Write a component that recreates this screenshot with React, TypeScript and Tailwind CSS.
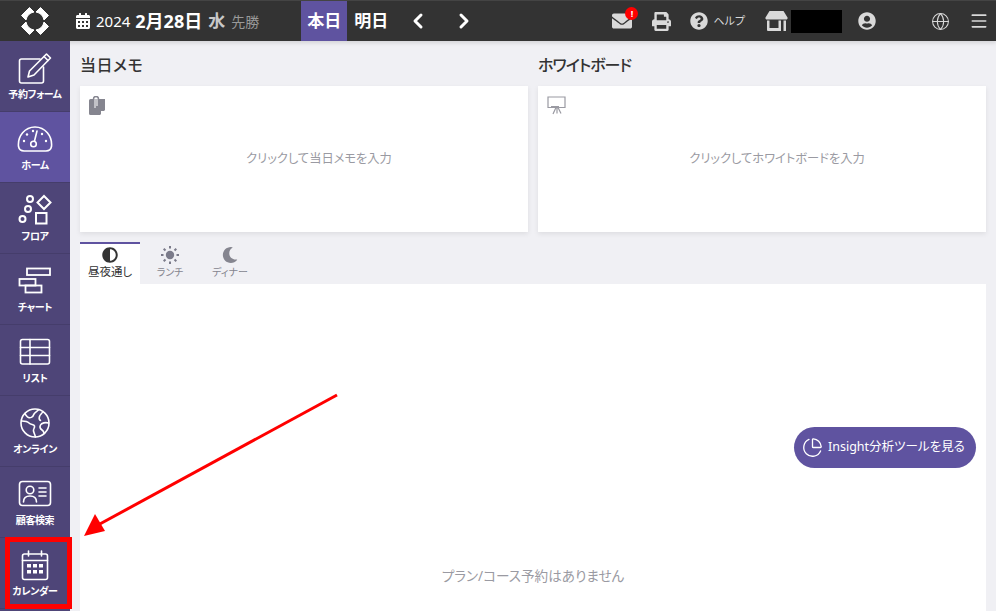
import { Globe, Menu, ChevronLeft, ChevronRight, PieChart } from "lucide-react";
import { FaCalendarAlt, FaEnvelope, FaPrint, FaQuestionCircle, FaUserCircle, FaAdjust, FaMoon } from "react-icons/fa";

const stroke = { fill: "none", stroke: "currentColor", strokeWidth: 1.6, strokeLinecap: "round", strokeLinejoin: "round" } as const;

function FormIcon() {
  return (
    <svg width="36" height="32" viewBox="0 0 36 32" {...stroke}>
      <path d="M23 7H4.500A2 2 0 0 0 2.500 9v20a2 2 0 0 0 2 2h20a2 2 0 0 0 2-2V15" />
      <path d="M29.500 2 33.500 6 17 23l-6 2 1.500-6z" />
      <path d="m27 4.500 4 4" />
    </svg>
  );
}

function GaugeIcon() {
  return (
    <svg width="36" height="30" viewBox="0 0 36 30" {...stroke}>
      <path d="M7 27h22c3 0 5-2 5.500-4.500C35.500 12 28 3 18 3S.500 12 1.500 22.500C2 25 4 27 7 27z" />
      <circle cx="16.500" cy="20" r="2.800" />
      <path d="m17.500 17 2.500-10" />
      <g fill="currentColor" stroke="none">
        <circle cx="7" cy="17" r="1.200" />
        <circle cx="10" cy="10.500" r="1.200" />
        <circle cx="16" cy="7" r="1.200" />
        <circle cx="25" cy="10" r="1.200" />
        <circle cx="29" cy="17" r="1.200" />
      </g>
    </svg>
  );
}

function FloorIcon() {
  return (
    <svg width="34" height="32" viewBox="0 0 34 32" fill="none" stroke="currentColor" strokeWidth="2">
      <circle cx="12" cy="5" r="3" />
      <circle cx="10" cy="15" r="3" />
      <circle cx="4.500" cy="25" r="3" />
      <path d="m26 2 6.500 6.500L26 15l-6.500-6.500z" />
      <rect x="18" y="19" width="10.500" height="10.500" />
    </svg>
  );
}

function ChartIcon() {
  return (
    <svg width="34" height="28" viewBox="0 0 34 28" fill="none" stroke="currentColor" strokeWidth="1.800">
      <rect x="9" y="1.500" width="23" height="6.500" />
      <rect x="1.500" y="12" width="16" height="6.500" />
      <rect x="7.500" y="18.500" width="16" height="7" />
    </svg>
  );
}

function ListIcon() {
  return (
    <svg width="32" height="28" viewBox="0 0 32 28" {...stroke}>
      <rect x="1.500" y="1.500" width="29" height="24.500" rx="2" />
      <path d="M1.500 9.500h29M1.500 17.500h29M11 1.500V26" />
    </svg>
  );
}

function EarthIcon() {
  return (
    <svg width="32" height="32" viewBox="0 0 32 32" {...stroke}>
      <circle cx="16" cy="16" r="14" />
      <path d="M20 2.500c-2 2-5 3-5.500 5.500S11 11 9.500 10.500 6 7 6 6.500M3 14c3 0 5 0 7 2s5 1 5.500 3-1.500 3-1 5 1.500 4 2 6M24 4.500c-1 2-3 3-3.500 5s-1 3 1 4M29.500 16c-3-1-7 0-8 2s0 4 1.500 5 2 3 2.500 3.500" />
    </svg>
  );
}

function CustomerIcon() {
  return (
    <svg width="34" height="28" viewBox="0 0 34 28" {...stroke}>
      <rect x="1.500" y="1.500" width="31" height="24" rx="3" />
      <circle cx="12" cy="10" r="3.800" />
      <path d="M5.500 22c0-4 2.500-6 6.500-6s6.500 2 6.500 6" />
      <path d="M21 8h7M21 12h7M21 16h7" />
    </svg>
  );
}

function CalendarIcon() {
  return (
    <svg width="28" height="31" viewBox="0 0 28 31" {...stroke}>
      <rect x="1.500" y="4" width="25" height="25.500" rx="2" />
      <path d="M1.500 10.500h25M7.500 1v5M20.500 1v5" />
      <g fill="currentColor" stroke="none">
        <rect x="6" y="14" width="4" height="3.500" />
        <rect x="12" y="14" width="4" height="3.500" />
        <rect x="18" y="14" width="4" height="3.500" />
        <rect x="6" y="20" width="4" height="3.500" />
        <rect x="12" y="20" width="4" height="3.500" />
        <rect x="18" y="20" width="4" height="3.500" />
      </g>
    </svg>
  );
}

function StoreIcon() {
  return (
    <svg width="23" height="20" viewBox="0 0 23 20" fill="currentColor">
      <path d="M4.500 0h14l4 6.500a1.500 1.500 0 0 1-1.500 2H2a1.500 1.500 0 0 1-1.500-2z" />
      <path d="M2 9.500h2.500v7.500h9V9.500H16V20H3a1 1 0 0 1-1-1z" />
      <rect x="18.500" y="9.500" width="2.500" height="10.500" />
    </svg>
  );
}

function Logo() {
  return (
    <svg width="30" height="30" viewBox="0 0 30 30" fill="white" stroke="white" strokeWidth="1" strokeLinejoin="round">
      <path d="M9.500 1.500 1.500 9.500 6 14A10 10 0 0 1 14 6z" />
      <path d="M20.500 1.500 28.500 9.500 24 14A10 10 0 0 0 16 6z" />
      <path d="M9.500 28.500 1.500 20.500 6 16A10 10 0 0 0 14 24z" />
      <path d="M20.500 28.500 28.500 20.500 24 16A10 10 0 0 1 16 24z" />
    </svg>
  );
}

function SunIcon() {
  return (
    <svg width="18" height="18" viewBox="0 0 18 18" fill="#7b7b8a">
      <circle cx="9" cy="9" r="4.200" />
      <path d="M8 0h2v2.500H8zM8 15.500h2V18H8zM0 8h2.500v2H0zM15.500 8H18v2h-2.500zM2 3.400 3.400 2l1.800 1.800-1.400 1.400zM12.800 14.200l1.400-1.400 1.800 1.800-1.400 1.400zM2 14.600l1.800-1.800 1.400 1.400L3.400 16zM12.800 3.800 14.600 2 16 3.400l-1.800 1.800z" />
    </svg>
  );
}

function MemoIcon() {
  return (
    <svg width="17" height="20" viewBox="0 0 17 20">
      <path d="M1.500 3H16v11l-5 5H1.500A1.500 1.500 0 0 1 0 17.500v-13A1.500 1.500 0 0 1 1.500 3z" fill="#85858f" />
      <path d="M12 19v-4h4z" fill="#fff" />
      <path d="M4.500 13V3a2.500 2.500 0 0 1 5 0v8" fill="none" stroke="#85858f" strokeWidth="1.500" />
      <path d="M6 12V3.500a1 1 0 0 1 2 0V10" fill="none" stroke="#fff" strokeWidth="1" />
    </svg>
  );
}

function BoardIcon() {
  return (
    <svg width="19" height="19" viewBox="0 0 19 19" fill="none" stroke="#9a9aa2" strokeWidth="1.200">
      <path d="M1 1h17v10.500H1z" />
      <path d="M4 10.500h8M9 11.500 6 18M10 11.500v6M11 11.500l3 6" />
    </svg>
  );
}

const navItems = [
  { label: "予約フォーム", icon: <FormIcon /> },
  { label: "ホーム", icon: <GaugeIcon />, active: true },
  { label: "フロア", icon: <FloorIcon /> },
  { label: "チャート", icon: <ChartIcon /> },
  { label: "リスト", icon: <ListIcon /> },
  { label: "オンライン", icon: <EarthIcon /> },
  { label: "顧客検索", icon: <CustomerIcon /> },
  { label: "カレンダー", icon: <CalendarIcon /> },
];

function Sidebar() {
  return (
    <nav className="w-[70px] shrink-0 bg-[#4e4578]">
      {navItems.map((item) => (
        <div
          key={item.label}
          className={`flex h-[71px] flex-col items-center justify-between border-b border-[#453d6b] pt-[10px] pb-[10px] text-white ${item.active ? "bg-[#5f53a0]" : ""}`}
        >
          <div className="flex h-[34px] items-center justify-center">{item.icon}</div>
          <span className="text-[10px] leading-[14px] font-bold tracking-[-0.4px] whitespace-nowrap">{item.label}</span>
        </div>
      ))}
    </nav>
  );
}

function Header() {
  return (
    <header className="flex h-[41px] shrink-0 items-center border-t border-[#444] bg-[#333333] text-white shadow-[0_2px_4px_rgba(0,0,0,0.12)]">
      <div className="flex w-[70px] justify-center"><Logo /></div>
      <FaCalendarAlt className="ml-[5px] text-[16px]" />
      <span className="ml-[5px] text-[15px]">2024</span>
      <span className="ml-[5px] text-[18px] font-bold">2月28日</span>
      <span className="ml-[6px] text-[17px] font-bold text-[#c8c8c8]">水</span>
      <span className="ml-[6px] text-[14px] text-[#999]">先勝</span>
      <div className="ml-[42px] flex h-full w-[46px] items-center justify-center bg-[#5f53a0] text-[17px] font-bold">本日</div>
      <div className="ml-[7px] text-[17px] font-bold">明日</div>
      <ChevronLeft className="ml-[18px]" size={24} strokeWidth={3} />
      <ChevronRight className="ml-[22px]" size={24} strokeWidth={3} />
      <div className="ml-auto flex items-center text-[#d9d9d9]">
        <div className="relative">
          <FaEnvelope className="text-[20px]" />
          <span className="absolute -top-[4px] -right-[6px] flex h-[13px] w-[13px] items-center justify-center rounded-full bg-[#ff0000] text-[9px] leading-none font-bold text-white">!</span>
        </div>
        <FaPrint className="ml-[20px] text-[19px]" />
        <FaQuestionCircle className="ml-[19px] text-[18px]" />
        <span className="ml-[5px] text-[11px] whitespace-nowrap">ヘルプ</span>
        <div className="ml-[20px]"><StoreIcon /></div>
        <div className="ml-[3px] h-[23px] w-[51px] bg-black" />
        <FaUserCircle className="ml-[16px] text-[18px]" />
        <Globe className="ml-[55px]" size={19} strokeWidth={1.300} />
        <Menu className="ml-[19px] mr-[7px]" size={20} strokeWidth={2} />
      </div>
    </header>
  );
}

function NoteCard({ title, titleClass, icon, placeholder }: { title: string; titleClass: string; icon: React.ReactNode; placeholder: string }) {
  return (
    <section className="min-w-0 flex-1">
      <h2 className={`h-[45px] pt-[12px] text-[16px] leading-[24px] font-medium text-[#333] ${titleClass}`}>{title}</h2>
      <div className="h-[146px] bg-white px-[9px] pt-[10px] shadow-[0_2px_5px_rgba(0,0,0,0.08)]">
        <div className="h-[20px]">{icon}</div>
        <p className="mt-[33px] pl-[30px] text-center text-[12.250px] leading-[20px] text-[#9a9aa2]">{placeholder}</p>
      </div>
    </section>
  );
}

function Tab({ label, icon, active }: { label: string; icon: React.ReactNode; active?: boolean }) {
  return (
    <div
      className={`flex h-[42px] w-[60px] flex-col items-center border-t-2 pt-[2px] ${active ? "border-[#5f53a0] bg-white text-[11.500px] text-[#333]" : "border-transparent text-[10px] text-[#85858f]"}`}
    >
      <div className="flex h-[18px] items-center">{icon}</div>
      <span className="leading-[16px] whitespace-nowrap">{label}</span>
    </div>
  );
}

export default function App() {
  return (
    <div className="relative flex h-[611px] w-[996px] flex-col overflow-hidden bg-[#f0f0f4] font-['Noto_Sans','Noto_Sans_CJK_JP',sans-serif] [font-feature-settings:'palt']">
      <Header />
      <div className="flex min-h-0 flex-1">
        <Sidebar />
        <main className="flex min-w-0 flex-1 flex-col pr-[10px] pl-[10px]">
          <div className="flex gap-[10px]">
            <NoteCard title="当日メモ" titleClass="tracking-[0.5px]" icon={<MemoIcon />} placeholder="クリックして当日メモを入力" />
            <NoteCard title="ホワイトボード" titleClass="tracking-[-1px]" icon={<BoardIcon />} placeholder="クリックしてホワイトボードを入力" />
          </div>
          <div className="mt-[10px] flex">
            <Tab label="昼夜通し" icon={<FaAdjust className="text-[16px]" />} active />
            <Tab label="ランチ" icon={<SunIcon />} />
            <Tab label="ディナー" icon={<FaMoon className="text-[16px]" />} />
          </div>
          <div className="relative flex-1 bg-white">
            <p className="absolute right-0 bottom-[25px] left-0 text-center text-[13.600px] leading-[20px] text-[#9a9aa2]">プラン/コース予約はありません</p>
            <button className="absolute top-[143px] right-[10px] flex h-[41px] w-[182px] items-center gap-[5px] rounded-full bg-[#5f53a0] pl-[8px] text-[12.500px] whitespace-nowrap text-white">
              <PieChart size={21} strokeWidth={1.500} />
              Insight分析ツールを見る
            </button>
          </div>
        </main>
      </div>
      <div className="absolute top-[537px] left-[5px] h-[72px] w-[67px] border-[5px] border-[#ff0000]" />
      <svg className="absolute top-[390px] left-[80px]" width="262" height="150" viewBox="0 0 262 150">
        <path d="M257 5 18 135" stroke="#ff0000" strokeWidth="3" fill="none" />
        <path d="M4 146 15 124 25 141z" fill="#ff0000" />
      </svg>
    </div>
  );
}
